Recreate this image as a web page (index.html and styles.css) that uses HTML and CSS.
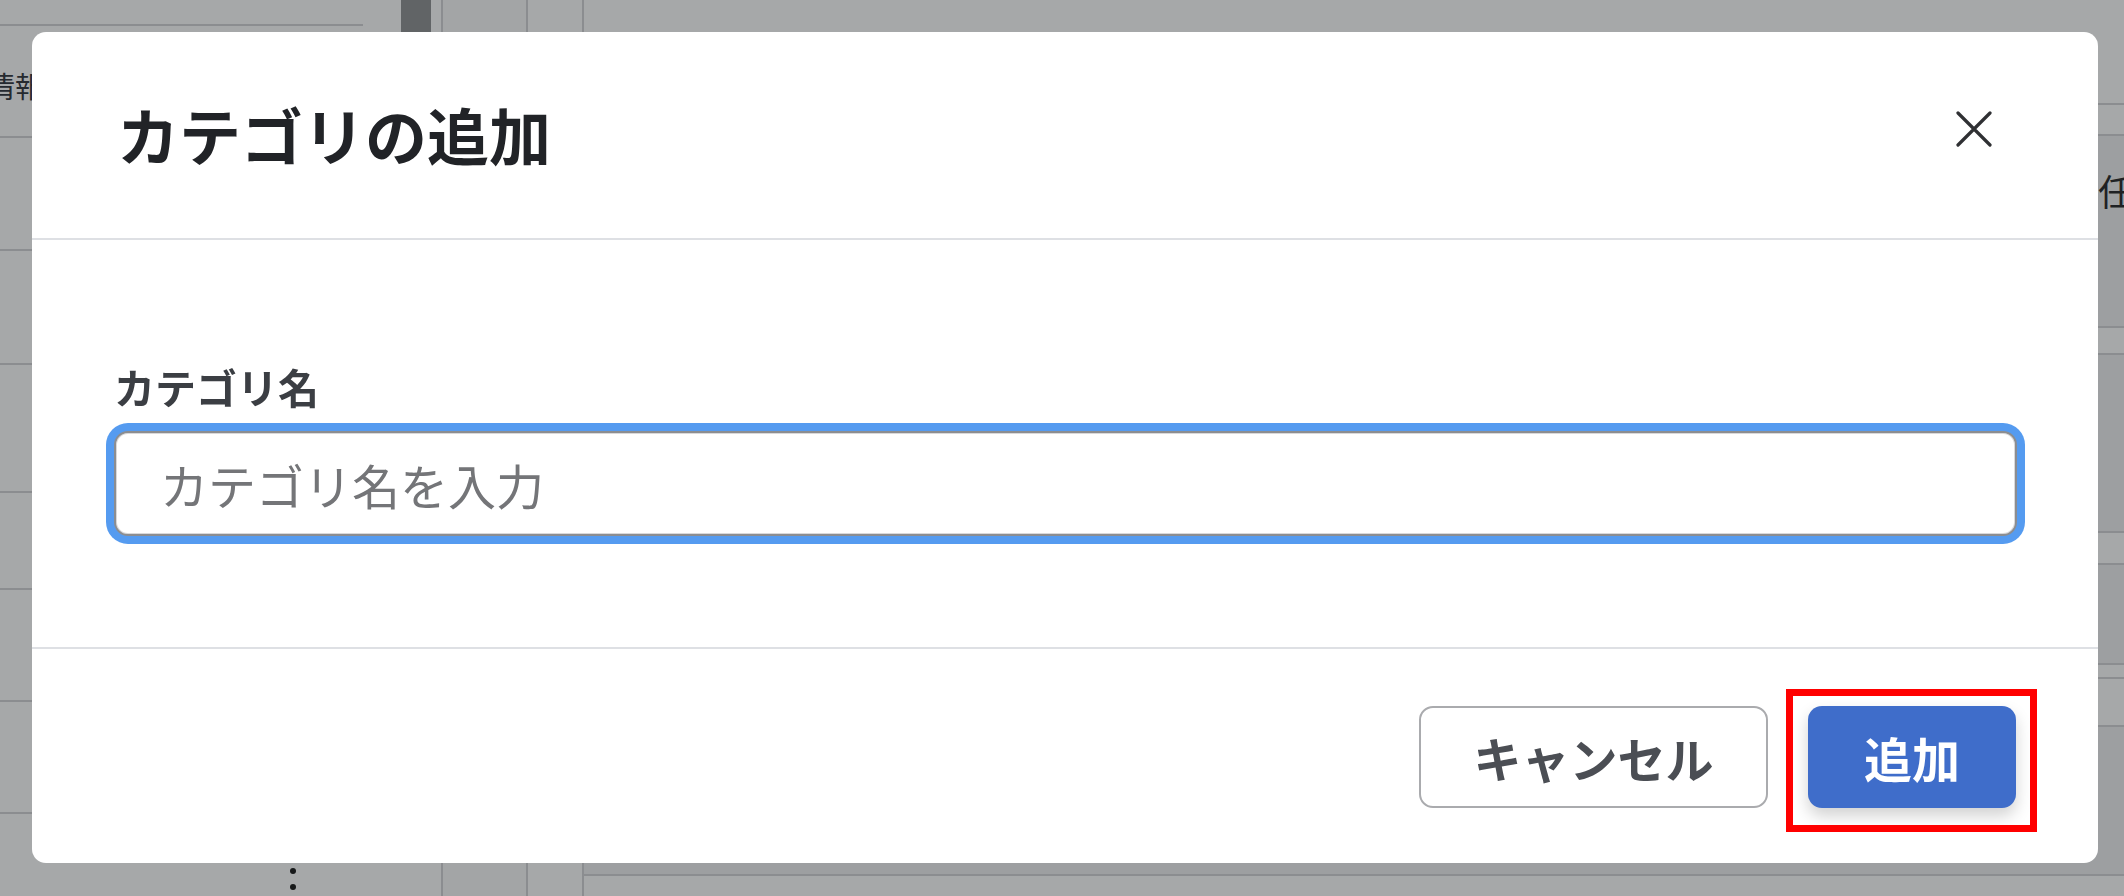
FILE: index.html
```html
<!DOCTYPE html>
<html lang="ja">
<head>
<meta charset="utf-8">
<title>カテゴリの追加</title>
<link rel="stylesheet" href="styles.css">
</head>
<body>
<div class="page">
  <aside class="sidebar">
    <div class="side-list">
      <div class="side-row side-top"></div>
      <div class="side-row side-info"><span class="side-text">情報</span></div>
      <div class="side-row h113"></div>
      <div class="side-row h114"></div>
      <div class="side-row h128"></div>
      <div class="side-row h97"></div>
      <div class="side-row h112"></div>
      <div class="side-row h112"></div>
      <div class="side-row side-last">
        <div class="kebab"><i></i><i></i><i></i></div>
      </div>
    </div>
    <div class="scrollbar"><div class="thumb"></div></div>
  </aside>
  <div class="col col-a"></div>
  <div class="col col-b"></div>
  <main class="main">
    <div class="mrow r103"></div>
    <div class="mrow r31"></div>
    <div class="mrow r192 shade"><span></span><span class="mtext">任意</span></div>
    <div class="mrow r27"></div>
    <div class="mrow r178 shade"></div>
    <div class="mrow r32"></div>
    <div class="mrow r100 shade"></div>
    <div class="mrow r14"></div>
    <div class="mrow r48"></div>
    <div class="mrow r149 shade"></div>
    <div class="mrow rlast"></div>
  </main>
</div>

<div class="backdrop">
  <div class="modal" role="dialog" aria-labelledby="modal-title">
    <header class="modal-header">
      <h1 class="modal-title" id="modal-title">カテゴリの追加</h1>
      <button class="close-btn" type="button" aria-label="閉じる">
        <svg width="36" height="36" viewBox="0 0 36 36" aria-hidden="true">
          <path d="M2 2 L34 34 M34 2 L2 34" stroke="#2f3033" stroke-width="3.2" stroke-linecap="round" fill="none"/>
        </svg>
      </button>
    </header>
    <section class="modal-body">
      <label class="field-label" for="cat-name">カテゴリ名</label>
      <input class="field-input" id="cat-name" type="text" placeholder="カテゴリ名を入力">
    </section>
    <footer class="modal-footer">
      <button class="btn btn-cancel" type="button">キャンセル</button>
      <span class="highlight">
        <button class="btn btn-primary" type="button">追加</button>
      </span>
    </footer>
  </div>
</div>
</body>
</html>
```

FILE: styles.css
```css
html, body {
  margin: 0;
  padding: 0;
}

body {
  width: 2124px;
  height: 896px;
  overflow: hidden;
  background: #ffffff;
  font-family: "Noto Sans CJK JP", "Noto Sans", sans-serif;
  color: #212529;
}

/* ---------- underlying page ---------- */
.page {
  display: flex;
  height: 896px;
}

.sidebar {
  display: flex;
  width: 441px;
  border-right: 2px solid #d2d3d6;
  flex-shrink: 0;
}

.side-list {
  width: 363px;
  margin-right: 38px;
  display: flex;
  flex-direction: column;
}

.side-row {
  border-bottom: 2px solid #d2d3d6;
  flex-shrink: 0;
}

.side-top { height: 24px; }
.side-info {
  height: 110px;
  display: flex;
  align-items: center;
  overflow: hidden;
}
.side-text {
  margin-left: -14px;
  margin-top: 8px;
  font-size: 29px;
  color: #2a2d35;
}
.h113 { height: 111px; }
.h114 { height: 112px; }
.h128 { height: 126px; }
.h97 { height: 95px; }
.h112 { height: 110px; }
.side-last {
  flex: 1;
  border-bottom: none;
}

.kebab {
  display: flex;
  flex-direction: column;
  gap: 10px;
  width: 6px;
  margin: 54px 0 0 290px;
}
.kebab i {
  display: block;
  width: 6px;
  height: 6px;
  border-radius: 50%;
  background: #111;
}

.scrollbar {
  width: 30px;
}
.thumb {
  height: 32px;
  background: #8d8e90;
}

.col {
  flex-shrink: 0;
  height: 896px;
  border-right: 2px solid #d2d3d6;
}
.col-a { width: 83px; background: #fafafa; }
.col-b { width: 54px; }

.main {
  flex: 1;
  display: flex;
  flex-direction: column;
}

.mrow {
  flex-shrink: 0;
  border-bottom: 2px solid #d2d3d6;
  display: grid;
  grid-template-columns: 1514px 1fr;
}
.mrow.shade { background: #f0f0f2; }
.r103 { height: 103px; border-bottom: none; }
.r31 { height: 29px; border-top: 2px solid #d2d3d6; }
.r192 { height: 190px; }
.r27 { height: 25px; }
.r178 { height: 176px; }
.r32 { height: 30px; }
.r100 { height: 98px; }
.r14 { height: 12px; }
.r48 { height: 46px; }
.r149 { height: 147px; }
.rlast { flex: 1; border-bottom: none; }

.mtext {
  font-size: 36px;
  color: #1e1f22;
  padding-top: 28px;
  white-space: nowrap;
}

/* ---------- modal ---------- */
.backdrop {
  position: fixed;
  inset: 0;
  background: rgba(33, 37, 41, 0.4);
  padding: 32px 26px 33px 32px;
  box-sizing: border-box;
  display: flex;
}

.modal {
  flex: 1;
  display: flex;
  flex-direction: column;
  background: #ffffff;
  border-radius: 14px;
  overflow: hidden;
}

.modal-header {
  height: 206px;
  border-bottom: 2px solid #dee0e4;
  display: flex;
  align-items: center;
  justify-content: space-between;
  padding: 0 88px 0 85px;
  flex-shrink: 0;
}

.modal-title {
  margin: 0 0 2px;
  font-size: 62px;
  font-weight: 700;
  line-height: 1.2;
  color: #212327;
}

.close-btn {
  width: 72px;
  height: 72px;
  border: none;
  background: transparent;
  padding: 0;
  display: flex;
  align-items: center;
  justify-content: center;
  margin-bottom: 12px;
  cursor: pointer;
}

.modal-body {
  height: 407px;
  box-sizing: border-box;
  padding: 116px 81px 0 82px;
  display: flex;
  flex-direction: column;
}

.field-label {
  font-size: 41px;
  font-weight: 700;
  line-height: 60px;
  color: #3b3e43;
  margin-bottom: 15px;
}

.field-input {
  box-sizing: border-box;
  width: 100%;
  height: 105px;
  border: 2px solid #8c8d90;
  border-radius: 14px;
  padding: 0 40px 0 44px;
  font-family: "Noto Sans CJK JP", "Noto Sans", sans-serif;
  font-size: 48px;
  color: #212529;
  background: #ffffff;
  outline: none;
  box-shadow: inset 0 0 0 1px #d9d9db, 0 0 0 8px #559bf0;
}

.field-input::placeholder {
  color: #747578;
}

.modal-footer {
  flex: 1;
  border-top: 2px solid #dee0e4;
  display: flex;
  justify-content: flex-end;
  align-items: flex-start;
  gap: 40px;
  padding: 57px 82px 0 0;
}

.btn {
  height: 102px;
  border-radius: 14px;
  font-family: "Noto Sans CJK JP", "Noto Sans", sans-serif;
  font-size: 48px;
  font-weight: 700;
  line-height: 1;
  cursor: pointer;
}

.btn-cancel {
  width: 349px;
  background: #ffffff;
  border: 2px solid #aaabae;
  color: #4b4e54;
  padding: 0;
}

.btn-primary {
  width: 208px;
  background: #3f6dca;
  border: none;
  color: #ffffff;
  padding: 0;
  box-shadow: 0 8px 16px rgba(0, 0, 0, 0.18);
  display: block;
}

.highlight {
  position: relative;
  display: block;
}

.highlight::after {
  content: "";
  position: absolute;
  top: -17px;
  left: -22px;
  right: -21px;
  bottom: -24px;
  border: 7px solid #ff0000;
  pointer-events: none;
}
```
